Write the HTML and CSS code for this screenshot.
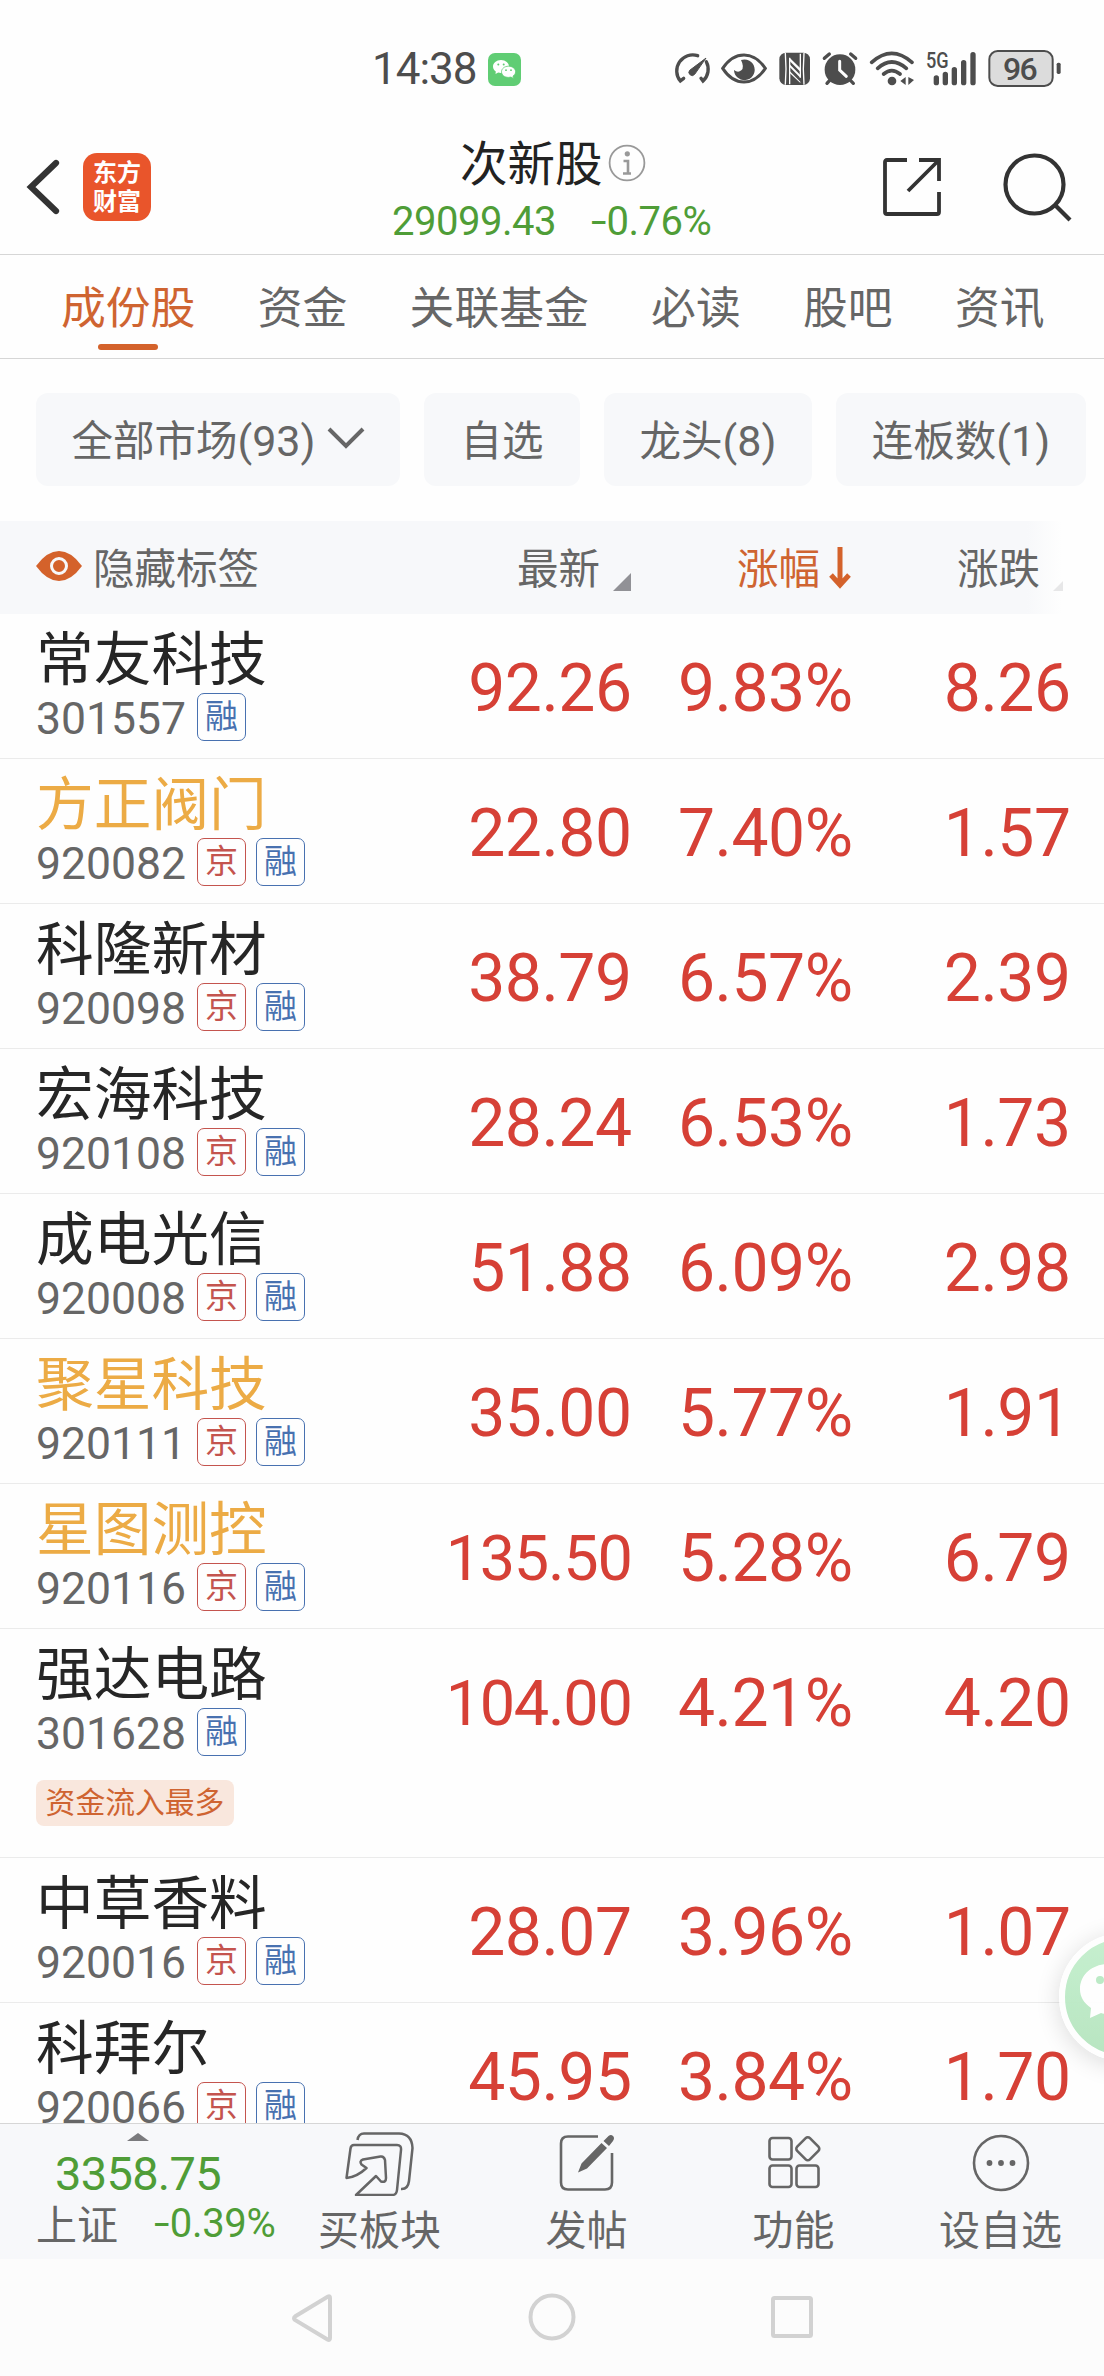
FILE: index.html
```html
<!DOCTYPE html>
<html lang="zh-CN">
<head>
<meta charset="utf-8">
<title>次新股</title>
<link rel="stylesheet" href="styles.css">
</head>
<body>
<div class="screen">
  <div class="status">
    <span class="clock">14:38</span>
    <svg class="wechat" width="33" height="33" viewBox="0 0 33 33">
      <rect width="33" height="33" rx="7" fill="#60cd74"/>
      <path d="M13 7c-4.600 0-8 3-8 6.500 0 2 1 3.800 2.800 5L7.500 21l2.700-1.400c1 .3 1.800.4 2.800.4 4.600 0 8-3 8-6.500S17.600 7 13 7z" fill="#fff"/>
      <path d="M20.500 13.200c-4 0-7 2.500-7 5.600s3 5.600 7 5.600c.9 0 1.700-.1 2.400-.3l2.600 1.300-.5-2.300c1.600-1 2.600-2.500 2.600-4.300 0-3.100-3.100-5.600-7.100-5.600z" fill="#fff" stroke="#60cd74" stroke-width=".8"/>
      <g fill="#60cd74"><circle cx="10.300" cy="11.500" r="1"/><circle cx="15.700" cy="11.500" r="1"/><circle cx="18" cy="17.200" r=".9"/><circle cx="23" cy="17.200" r=".9"/></g>
    </svg>
    <div class="status-icons">
      <svg width="42" height="36" viewBox="36 60 126 108" fill="none" stroke="#4d4d4d" stroke-width="10" stroke-linecap="round">
        <path d="M110 74A48 48 0 0 0 58 150L68 142M136 92A48 48 0 0 1 126 150L120 142"/>
        <path d="M134 82L86 118a9 9 0 1 0 15 12z" fill="#4d4d4d" stroke-width="3"/>
      </svg>
      <svg width="58" height="36" viewBox="162 60 174 108">
        <path d="M185 112Q212 72 249 72T313 112Q286 153 249 153T185 112z" fill="none" stroke="#4d4d4d" stroke-width="9"/>
        <path d="M240 87a31 31 0 1 1-21 30q12 10 22 1t-1-31z" fill="#4d4d4d"/>
      </svg>
      <svg width="43" height="36" viewBox="336 60 129 108">
        <rect x="355" y="65" width="92" height="97" rx="20" fill="#4d4d4d"/>
        <path d="M373 66Q377 114 373 161M429 66Q425 114 429 161" fill="none" stroke="#fefefe" stroke-width="4"/>
        <path d="M386 80L418 112V122L386 90zM386 100L418 132V140L386 108zM386 120L418 152V156L386 126z" fill="#fefefe"/>
        <path d="M386 80V160M418 68V140" stroke="#fefefe" stroke-width="4"/>
      </svg>
      <svg width="48" height="36" viewBox="465 60 144 108" fill="none" stroke="#4d4d4d" stroke-width="10" stroke-linecap="round">
        <circle cx="537" cy="116" r="46" fill="#4d4d4d" stroke="none"/>
        <path d="M490 82L505 69M584 82L569 69M508 146L498 157M566 146L577 157"/>
        <path d="M536 91V117L556 136" stroke="#fefefe" stroke-width="9"/>
      </svg>
      <svg width="56" height="36" viewBox="609 60 168 108" fill="none" stroke="#4d4d4d" stroke-width="11" stroke-linecap="round">
        <path d="M632 94Q692 40 753 94M650 112Q692 74 736 112M668 129Q692 109 717 129"/>
        <circle cx="693" cy="150" r="13" fill="#4d4d4d" stroke="none"/>
        <path d="M734 138V162L718 150zM742 138V162L759 147z" fill="#4d4d4d" stroke="none"/>
      </svg>
      <svg width="62" height="36" viewBox="777 60 186 108" overflow="visible">
        <g stroke="#4d4d4d" stroke-width="16" stroke-linecap="round"><path d="M826 141V155M853 130V155M880 116V155M908 95V155M936 71V155"/></g>
        <text class="net" x="795" y="110" textLength="68" lengthAdjust="spacingAndGlyphs">5G</text>
      </svg>
      <svg width="80" height="36" viewBox="963 60 240 108" overflow="visible">
        <rect x="985" y="60" width="190" height="105" rx="25" fill="#dcdcdc" stroke="#4d4d4d" stroke-width="6"/>
        <rect x="1187" y="95" width="12" height="34" rx="5" fill="#4d4d4d"/>
        <text class="charge" x="1078" y="146" text-anchor="middle" textLength="104">96</text>
      </svg>
    </div>
  </div>

  <header class="topbar">
    <svg class="back" width="34" height="56" viewBox="0 0 34 56"><path d="M30 4L5 28L30 52" fill="none" stroke="#333" stroke-width="6.200" stroke-linecap="round"/></svg>
    <div class="logo"><span>东方</span><span>财富</span></div>
    <div class="heading">
      <div class="title">次新股
        <svg width="38" height="38" viewBox="0 0 38 38"><circle cx="19" cy="19" r="17.400" fill="none" stroke="#999" stroke-width="1.800"/><circle cx="19.300" cy="9.800" r="2.600" fill="#999"/><path d="M15.500 17H20V29M15 29.500H23" fill="none" stroke="#999" stroke-width="2.600"/></svg>
      </div>
      <div class="quote"><span>29099.43</span><span><i class="dash">-</i>0.76%</span></div>
    </div>
    <svg class="share" width="60" height="60" viewBox="0 0 60 60" fill="none" stroke="#333" stroke-width="3.800"><path d="M25 3H5Q3 3 3 5V55Q3 57 5 57H55Q57 57 57 55V35M37 3H57V24M57 3L26 34"/></svg>
    <svg class="search" width="70" height="70" viewBox="0 0 70 70" fill="none" stroke="#333" stroke-width="4.200"><circle cx="32.500" cy="32.500" r="29"/><path d="M53 53L68 68"/></svg>
  </header>

  <nav class="tabs">
    <span class="tab active">成份股</span><span class="tab">资金</span><span class="tab">关联基金</span><span class="tab">必读</span><span class="tab">股吧</span><span class="tab">资讯</span>
  </nav>

  <div class="chips">
    <div class="chip market">全部市场<b>(93)</b><svg width="38" height="24" viewBox="0 0 38 24"><path d="M2 3L19 20L36 3" fill="none" stroke="#666" stroke-width="4"/></svg></div>
    <div class="chip watch">自选</div>
    <div class="chip leader">龙头<b>(8)</b></div>
    <div class="chip streak">连板数<b>(1)</b></div>
  </div>

  <div class="thead">
    <div class="toggle">
      <svg width="46" height="30" viewBox="0 0 46 30"><path d="M0 15Q11 0 23 0T46 15Q35 30 23 30T0 15z" fill="#d4622b"/><circle cx="23" cy="15" r="7.500" fill="#d4622b" stroke="#f7f8fa" stroke-width="3"/></svg>
      <span>隐藏标签</span>
    </div>
    <div class="sort latest">最新<svg width="18" height="18" viewBox="0 0 18 18"><path d="M18 0V18H0z" fill="#919196"/></svg></div>
    <div class="sort rise">涨幅<svg width="22" height="42" viewBox="0 0 22 42"><path d="M11 0V36M2 28L11 38L20 28" fill="none" stroke="#d4622b" stroke-width="5"/></svg></div>
    <div class="sort diff">涨跌<svg width="18" height="18" viewBox="0 0 18 18"><path d="M10 8V18H0z" fill="#919196"/></svg></div>
  </div>

  <main class="list">
    <div class="row"><div class="stock"><div class="name">常友科技</div><div class="meta"><span class="code">301557</span><span class="badge rong">融</span></div></div><span class="num">92.26</span><span class="num">9.83%</span><span class="num">8.26</span></div>
    <div class="row"><div class="stock"><div class="name held">方正阀门</div><div class="meta"><span class="code">920082</span><span class="badge jing">京</span><span class="badge rong">融</span></div></div><span class="num">22.80</span><span class="num">7.40%</span><span class="num">1.57</span></div>
    <div class="row"><div class="stock"><div class="name">科隆新材</div><div class="meta"><span class="code">920098</span><span class="badge jing">京</span><span class="badge rong">融</span></div></div><span class="num">38.79</span><span class="num">6.57%</span><span class="num">2.39</span></div>
    <div class="row"><div class="stock"><div class="name">宏海科技</div><div class="meta"><span class="code">920108</span><span class="badge jing">京</span><span class="badge rong">融</span></div></div><span class="num">28.24</span><span class="num">6.53%</span><span class="num">1.73</span></div>
    <div class="row"><div class="stock"><div class="name">成电光信</div><div class="meta"><span class="code">920008</span><span class="badge jing">京</span><span class="badge rong">融</span></div></div><span class="num">51.88</span><span class="num">6.09%</span><span class="num">2.98</span></div>
    <div class="row"><div class="stock"><div class="name held">聚星科技</div><div class="meta"><span class="code">920111</span><span class="badge jing">京</span><span class="badge rong">融</span></div></div><span class="num">35.00</span><span class="num">5.77%</span><span class="num">1.91</span></div>
    <div class="row"><div class="stock"><div class="name held">星图测控</div><div class="meta"><span class="code">920116</span><span class="badge jing">京</span><span class="badge rong">融</span></div></div><span class="num long">135.50</span><span class="num">5.28%</span><span class="num">6.79</span></div>
    <div class="row tagged"><div class="stock"><div class="name">强达电路</div><div class="meta"><span class="code">301628</span><span class="badge rong">融</span></div><span class="tag">资金流入最多</span></div><span class="num long">104.00</span><span class="num">4.21%</span><span class="num">4.20</span></div>
    <div class="row"><div class="stock"><div class="name">中草香料</div><div class="meta"><span class="code">920016</span><span class="badge jing">京</span><span class="badge rong">融</span></div></div><span class="num">28.07</span><span class="num">3.96%</span><span class="num">1.07</span></div>
    <div class="row"><div class="stock"><div class="name">科拜尔</div><div class="meta"><span class="code">920066</span><span class="badge jing">京</span><span class="badge rong">融</span></div></div><span class="num">45.95</span><span class="num">3.84%</span><span class="num">1.70</span></div>
    <div class="float">
      <svg width="116" height="116" viewBox="0 0 116 116"><path d="M44 25C27 25 15 36 15 50c0 8 4 14 11 19l-1 10 11-5c3 1 6 1 9 1 17 0 30-11 30-25S61 25 44 25z" fill="#fff"/><circle cx="35" cy="41" r="4" fill="#b8e9c3"/><circle cx="55" cy="41" r="4" fill="#b8e9c3"/></svg>
    </div>
  </main>

  <footer class="toolbar">
    <div class="index">
      <svg class="caret" width="22" height="8" viewBox="0 0 22 8"><path d="M0 8L11 0L22 8z" fill="#7a7a7d"/></svg>
      <div class="points">3358.75</div>
      <div class="sub"><span>上证</span><span class="pct"><i class="dash">-</i>0.39%</span></div>
    </div>
    <div class="action"><svg width="70" height="64" viewBox="0 0 70 64" fill="none" stroke="#666" stroke-width="2.500" stroke-linejoin="round">
      <path d="M12.500 8Q13.500 1.500 19 1.500H54Q67 2 67.500 16L64 49Q63 57.500 56 57"/>
      <path d="M1.500 46L5.500 16.500Q6 13 9 13H52Q56.500 13 56 18L52 58Q51.500 63 47 63H11L31 44L36 49.500Q41 51 41 46L40 28Q39 24 35.500 24.500L18 27.500Q14 29 16.500 32.500L21.500 36Q12 45 1.500 46z"/></svg><span>买板块</span></div>
    <div class="action"><svg width="70" height="64" viewBox="0 0 70 64">
      <path d="M46 4.500H16Q9 4.500 9 11.500V50.500Q9 57.500 16 57.500H53Q60 57.500 60 50.500V21" fill="none" stroke="#666" stroke-width="2.600"/>
      <path d="M49.500 11L55 16L35 36.500L26 40.500L29.500 31.500zM51.500 9L56.500 4Q59 2 61 4T61 9L57 14z" fill="#666"/></svg><span>发帖</span></div>
    <div class="action"><svg width="70" height="64" viewBox="0 0 70 64" fill="none" stroke="#666" stroke-width="2.600">
      <rect x="10.500" y="6" width="22" height="21.500" rx="3"/><rect x="10.500" y="33.500" width="22" height="21.500" rx="3"/><rect x="37.500" y="33.500" width="22" height="21.500" rx="3"/><rect x="39.800" y="7.800" width="18" height="18" rx="3" transform="rotate(45 48.800 16.800)"/></svg><span>功能</span></div>
    <div class="action"><svg width="70" height="64" viewBox="0 0 70 64"><circle cx="35" cy="31" r="27" fill="none" stroke="#666" stroke-width="2.600"/><g fill="#666"><circle cx="23.500" cy="31" r="2.900"/><circle cx="35" cy="31" r="2.900"/><circle cx="46.500" cy="31" r="2.900"/></g></svg><span>设自选</span></div>
  </footer>

  <div class="sysnav">
    <svg width="42" height="50" viewBox="0 0 42 50"><path d="M37 3.500Q39 2.500 39 5V45Q39 48 36.500 46.500L4 27Q2 25 4 23.500z" fill="none" stroke="#d2d2d2" stroke-width="4"/></svg>
    <svg width="48" height="50" viewBox="0 0 48 50"><circle cx="24" cy="24" r="21.500" fill="none" stroke="#d2d2d2" stroke-width="4"/></svg>
    <svg width="44" height="50" viewBox="0 0 44 50"><rect x="3" y="5" width="38" height="38" rx="1.500" fill="none" stroke="#d2d2d2" stroke-width="4"/></svg>
  </div>
</div>
</body>
</html>
```
FILE: styles.css
```css
* { box-sizing: border-box; }
body {
  margin: 0;
  background: #fefefe;
  color: #666;
  font-family: "Noto Sans CJK SC", sans-serif;
}
svg { display: block; flex: none; }
i, b { font-style: normal; font-weight: 400; }
.screen {
  width: 1104px;
  height: 2376px;
  display: flex;
  flex-direction: column;
  overflow: hidden;
}
.screen > * { flex: none; }

.status {
  height: 120px;
  padding: 51px 42px 33px 372px;
  display: flex;
  align-items: center;
}
.clock {
  width: 116px;
  font: 400 44px/36px Roboto, sans-serif;
  letter-spacing: -1px;
  color: #4d4d4d;
}
.status-icons { display: flex; margin-left: auto; }
.net { font: 500 66px Roboto, sans-serif; fill: #4d4d4d; }
.charge { font: 500 96px Roboto, sans-serif; fill: #4d4d4d; }

.topbar {
  height: 135px;
  border-bottom: 1px solid #d6d6d6;
  display: flex;
  align-items: flex-start;
  padding-left: 26px;
}
.back { margin-top: 39px; }
.logo {
  width: 68px;
  height: 68px;
  margin: 33px 0 0 23px;
  padding-top: 3px;
  border-radius: 14px;
  background: #e9552b;
  color: #fff;
  font-size: 24px;
  font-weight: 700;
  line-height: 29px;
  display: flex;
  flex-direction: column;
  align-items: center;
}
.heading { width: 402px; margin-left: 202px; }
.title {
  display: flex;
  align-items: center;
  gap: 5px;
  padding-left: 107px;
  margin-top: 14px;
  height: 54px;
  font-size: 47.500px;
  line-height: 54px;
  color: #222;
}
.title svg { margin-top: 4px; }
.quote {
  display: flex;
  gap: 35px;
  padding-left: 39px;
  margin-top: 14px;
  font: 400 40px/40px Roboto, sans-serif;
  letter-spacing: -0.500px;
  color: #4f9d37;
}
.dash { display: inline-block; transform: scaleX(1.400); transform-origin: left; margin-right: 5px; }
.share { margin: 37px 0 0 127px; }
.search { margin: 32px 0 0 60px; }

.tabs {
  height: 104px;
  border-bottom: 1px solid #d6d6d6;
  padding-left: 61px;
  display: flex;
  gap: 62.300px;
  font-size: 44.800px;
  line-height: 100px;
}
.tab { display: flex; flex-direction: column; align-items: center; height: 100px; }
.active { color: #cf6431; }
.active::after {
  content: "";
  width: 60px;
  height: 6px;
  margin-top: -11px;
  border-radius: 3px;
  background: #d4622b;
  flex: none;
}

.chips { display: flex; gap: 24px; padding: 34px 0 35px 36px; }
.chip {
  height: 93px;
  padding-bottom: 4px;
  border-radius: 12px;
  background: #f7f8fa;
  display: flex;
  align-items: center;
  justify-content: center;
  font-size: 41.500px;
  line-height: 60px;
}
.chip b { font: 400 43px/60px Roboto, sans-serif; padding-top: 6px; }
.chip svg { margin-left: 11px; }
.market { width: 364px; }
.watch { width: 156px; }
.leader { width: 208px; }
.streak { width: 250px; }

.thead {
  height: 93px;
  display: flex;
  align-items: center;
  background: linear-gradient(90deg, #f7f8fa 1027px, #fefefe 1062px);
  font-size: 41.500px;
  line-height: 90px;
}
.thead > * { height: 93px; }
.toggle { width: 416px; padding-left: 36px; display: flex; align-items: flex-start; gap: 11px; }
.toggle svg { margin-top: 30px; }
.sort { display: flex; justify-content: flex-end; }
.latest { width: 215px; }
.latest svg, .diff svg { margin: 52px 0 0 13px; }
.rise { width: 220px; color: #cf6431; }
.rise svg { margin: 26px 0 0 9px; }
.diff { width: 220px; }
.diff svg { opacity: .2; }

.list { flex: 1 1 0; min-height: 0; overflow: hidden; position: relative; }
.row {
  height: 145px;
  border-bottom: 1px solid #ebebeb;
  display: grid;
  grid-template-columns: 411.500px 220px 221px 218px;
}
.tagged { height: 229px; }
.stock { padding: 12px 0 0 36px; }
.name { height: 58px; font-size: 57.700px; line-height: 58px; color: #262626; white-space: nowrap; }
.held { color: #ecab45; }
.meta { display: flex; margin-top: 9px; height: 48px; }
.code {
  width: 161px;
  font: 400 44.500px/52px Roboto, sans-serif;
}
.badge {
  width: 49px;
  height: 48px;
  border: 1.500px solid;
  border-radius: 7px;
  margin-right: 10px;
  text-align: center;
  font-size: 33px;
  line-height: 40px;
}
.rong { color: #4871b0; }
.jing { color: #c4544e; }
.tag {
  display: block;
  width: 198px;
  height: 46px;
  margin-top: 24px;
  border-radius: 8px;
  background: #f9e7dd;
  color: #cf6431;
  font-size: 29.800px;
  line-height: 40px;
  text-align: center;
}
.num {
  height: 145px;
  font: 400 66px/150px Roboto, sans-serif;
  letter-spacing: -0.500px;
  text-align: right;
  color: #d64036;
}
.long { font-size: 63px; letter-spacing: -1.300px; }
.float {
  position: absolute;
  left: 1059px;
  top: 1319px;
  width: 128px;
  height: 128px;
  border: 6px solid #fff;
  border-radius: 50%;
  background: linear-gradient(#c3efcc, #b4e4be);
  box-shadow: 0 4px 24px rgba(0, 0, 0, .14);
  opacity: .94;
}

.toolbar {
  height: 136px;
  border-top: 1px solid #d6d6d6;
  background: #f7f8fa;
  display: flex;
}
.index { width: 276px; }
.caret { margin: 9px 0 0 127px; }
.points {
  margin: 8px 0 0 55px;
  font: 400 47px/50px Roboto, sans-serif;
  letter-spacing: -0.700px;
  color: #4f9d37;
}
.sub { display: flex; margin-left: 36px; font-size: 41px; line-height: 46px; }
.pct {
  margin-left: 36px;
  font: 400 40px/50px Roboto, sans-serif;
  letter-spacing: -0.300px;
  color: #4f9d37;
}
.action {
  width: 207px;
  padding-top: 8px;
  display: flex;
  flex-direction: column;
  align-items: center;
  font-size: 41px;
  line-height: 50px;
}
.action span { margin-top: 6px; }

.sysnav {
  height: 117px;
  background: #fcfcfc;
  padding: 34px 290px 0 291px;
  display: flex;
  justify-content: space-between;
}
```
